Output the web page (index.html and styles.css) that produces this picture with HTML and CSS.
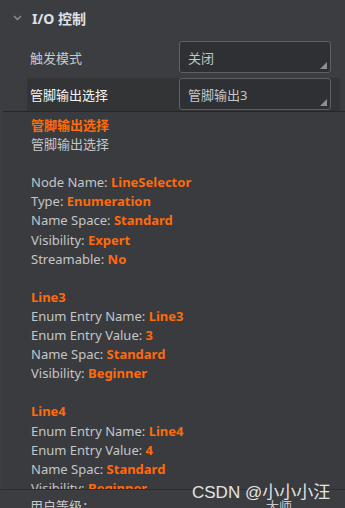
FILE: index.html
```html
<!DOCTYPE html>
<html lang="zh-CN">
<head>
  <meta charset="UTF-8" />
  <title>I/O 控制</title>
  <link rel="stylesheet" href="styles.css">
</head>
<body>
  <div class="panel">
    <div class="group-header">
      <svg class="chevron" width="9" height="6" viewBox="0 0 9 6">
        <path d="M1 1 L4.5 4.5 L8 1" fill="none" stroke="#8c8e92" stroke-width="1.4"/>
      </svg>
      <span class="group-title">I/O 控制</span>
    </div>

    <div class="row">
      <span class="row-label">触发模式</span>
      <div class="select">关闭<span class="select-corner"></span></div>
    </div>
    <div class="row row-active">
      <span class="row-label">管脚输出选择</span>
      <div class="select">管脚输出3<span class="select-corner"></span></div>
    </div>

    <div class="tooltip">
      <p class="hl">管脚输出选择</p>
      <p>管脚输出选择</p>
      <p>&nbsp;</p>
      <p>Node Name: <b>LineSelector</b></p>
      <p>Type: <b>Enumeration</b></p>
      <p>Name Space: <b>Standard</b></p>
      <p>Visibility: <b>Expert</b></p>
      <p>Streamable: <b>No</b></p>
      <p>&nbsp;</p>
      <p class="hl">Line3</p>
      <p>Enum Entry Name: <b>Line3</b></p>
      <p>Enum Entry Value: <b>3</b></p>
      <p>Name Spac: <b>Standard</b></p>
      <p>Visibility: <b>Beginner</b></p>
      <p>&nbsp;</p>
      <p class="hl">Line4</p>
      <p>Enum Entry Name: <b>Line4</b></p>
      <p>Enum Entry Value: <b>4</b></p>
      <p>Name Spac: <b>Standard</b></p>
      <p>Visibility: <b>Beginner</b></p>
    </div>

    <div class="footer-row">
      <span>用户等级：</span>
      <span class="footer-value">大师</span>
    </div>

    <div class="watermark">CSDN @小小小汪</div>
  </div>
</body>
</html>
```

FILE: styles.css
```css
:root {
  --panel-bg: #3c3d40;
  --row-active: #333436;
  --tip-bg: #3a3b3e;
  --orange: #ff6a0a;
  --text: #c4c6c9;
}

body {
  margin: 0;
  background-color: var(--panel-bg);
  font-family: "Noto Sans", "Noto Sans CJK SC", sans-serif;
  font-size: 13px;
  color: var(--text);
}

.panel {
  position: relative;
  width: 345px;
  height: 508px;
  overflow: hidden;
}

.group-header {
  display: flex;
  align-items: center;
  height: 36px;
  padding-left: 13px;
}

.chevron {
  margin-right: 10px;
}

.group-title {
  font-weight: bold;
  font-size: 14px;
  color: #dce1e8;
}

.row {
  display: flex;
  align-items: center;
  height: 42px;
  margin-left: 27px;
  margin-right: 5px;
  padding-left: 3px;
}

.row-active {
  align-items: flex-start;
  height: 33px;
  background-color: var(--row-active);
}

.row-active .row-label {
  align-self: center;
  color: #f2f4f6;
}

.row-label {
  width: 149px;
  color: #c8cacd;
}

.select {
  position: relative;
  box-sizing: border-box;
  width: 152px;
  height: 32px;
  padding: 6px 8px;
  background-color: #2f3033;
  border: 1px solid #5f6065;
  border-radius: 3px;
  color: #c4c6c9;
}

.select-corner {
  position: absolute;
  right: 3px;
  bottom: 3px;
  width: 0;
  height: 0;
  border-left: 7px solid transparent;
  border-bottom: 7px solid #8d8f93;
}

.tooltip {
  box-sizing: border-box;
  height: 378px;
  margin-left: 3px;
  padding: 4px 0 0 28px;
  background-color: var(--tip-bg);
  border-top: 1px solid #26272a;
  overflow: hidden;
}

.tooltip p {
  margin: 0;
  line-height: 19.1px;
}

.tooltip b,
.tooltip .hl {
  color: var(--orange);
  font-weight: bold;
}

.footer-row {
  display: flex;
  padding: 6px 0 0 30px;
  border-top: 1px solid #2c2d30;
  color: #c8cacd;
}

.footer-value {
  margin-left: 171px;
}

.watermark {
  position: absolute;
  left: 192px;
  top: 478px;
  font-family: "Liberation Sans", "Noto Sans CJK SC", sans-serif;
  font-size: 17px;
  color: #e4e4e4;
}
```
